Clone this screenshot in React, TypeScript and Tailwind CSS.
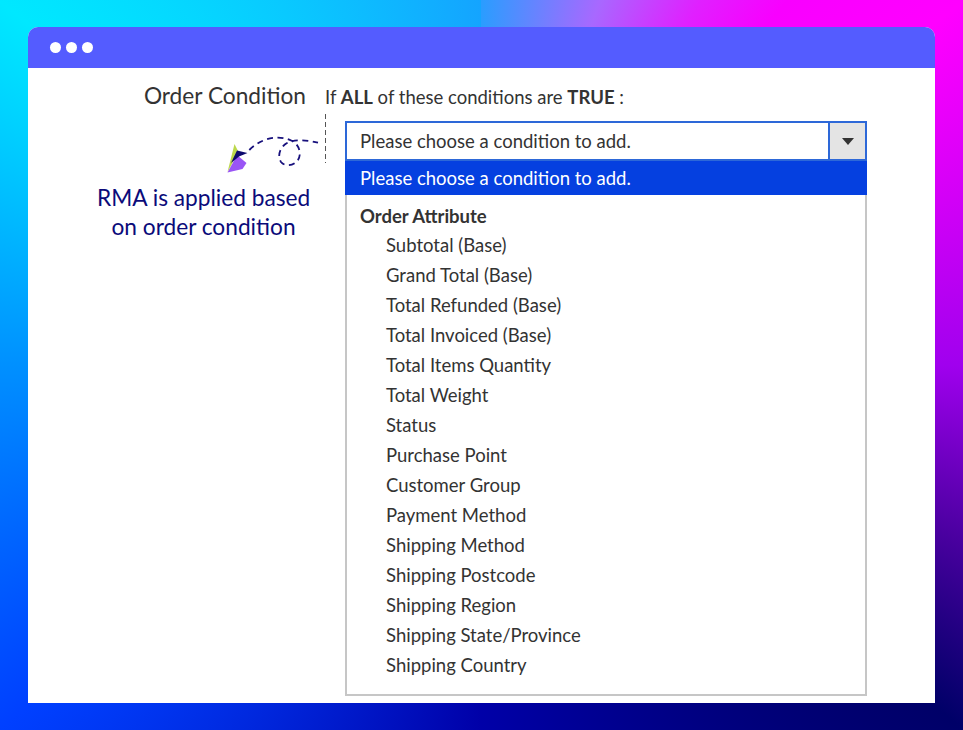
const options = [
  "Subtotal (Base)",
  "Grand Total (Base)",
  "Total Refunded (Base)",
  "Total Invoiced (Base)",
  "Total Items Quantity",
  "Total Weight",
  "Status",
  "Purchase Point",
  "Customer Group",
  "Payment Method",
  "Shipping Method",
  "Shipping Postcode",
  "Shipping Region",
  "Shipping State/Province",
  "Shipping Country",
];

export default function App() {
  return (
    <div className="w-[963px] h-[730px] pt-[27px] px-[28px] overflow-hidden bg-[conic-gradient(from_0deg_at_50%_50%,#2a9dff_0deg,#a868ff_18deg,#e020ff_31deg,#f800ff_40deg,#ff00ff_53deg,#a000ee_90deg,#4a00a0_110deg,#000068_127deg,#0000a8_180deg,#0040ff_233deg,#0090ff_270deg,#00e8ff_307deg,#14a4ff_360deg)] font-['Lato',sans-serif] text-[#333]">
      <div className="w-[907px] h-[676px] flex flex-col bg-white rounded-t-[10px] overflow-hidden">
        <div className="h-[41px] shrink-0 bg-[#545cff] flex items-center gap-[5px] pl-[22px] pb-[1px]">
          <span className="w-[11px] h-[11px] rounded-full bg-white" />
          <span className="w-[11px] h-[11px] rounded-full bg-white" />
          <span className="w-[11px] h-[11px] rounded-full bg-white" />
        </div>
        <div className="flex flex-1">
          <div className="w-[297px] shrink-0 flex flex-col">
            <div className="mt-[14px] h-[28px] mr-[19px] text-right text-[22.7px] leading-[28px] whitespace-nowrap">
              Order Condition
            </div>
            <svg width="102" height="64" viewBox="0 0 102 64" className="mt-[2px] ml-[197px] overflow-visible" fill="none">
              <path d="M2.5 60 L9.5 32 L13 39 L8 50 Z" fill="#bcd84c" />
              <path d="M2.5 60.5 L12 43 L21.5 51 L17.5 57 Z" fill="#9a55f5" />
              <path d="M6 51 L12 38.5 L22.5 41 L14 44.5 Z" fill="#0d0a6e" />
              <path
                d="M24.3 38 C35 27 52 22 66.7 28.7 C74 32 77 42 73 48 C69 54 60 55 56 50 C52 44 55 35 62 31 C70 27 82 28 93 30.7"
                stroke="#17107c"
                strokeWidth="1.8"
                strokeDasharray="6 4.5"
              />
              <path d="M100.5 2 V51" stroke="#555" strokeWidth="1" strokeDasharray="5 3" />
            </svg>
            <div className="mt-[7px] pl-[69px] w-[282px] text-center text-[22.7px] leading-[29px] text-[#0b0b7a] whitespace-nowrap">
              RMA is applied based
              <br />
              on order condition
            </div>
          </div>
          <div className="flex-1 flex flex-col">
            <div className="mt-[17px] h-[24px] text-[18.5px] leading-[24px] whitespace-nowrap">
              If <b>ALL</b> of these conditions are <b>TRUE</b> :
            </div>
            <div className="mt-[12px] ml-[20px] w-[522px] h-[575px] flex flex-col text-[18.5px]">
              <div className="h-[40px] shrink-0 flex border-2 border-[#2d68d8]">
                <div className="flex-1 flex items-center pl-[13px] pt-[1px]">Please choose a condition to add.</div>
                <div className="w-[37px] shrink-0 border-l-2 border-[#2d68d8] bg-[#e4e4e4] flex items-center justify-center">
                  <span className="w-0 h-0 border-x-[6px] border-x-transparent border-t-[7px] border-t-[#333]" />
                </div>
              </div>
              <div className="flex-1 flex flex-col border-2 border-t-0 border-[#c6c6c6]">
                <div className="h-[34px] shrink-0 -mx-[2px] pl-[15px] pt-[1px] flex items-center bg-[#0540e0] text-white">
                  Please choose a condition to add.
                </div>
                <div className="mt-[6px] h-[30px] pl-[13px] pt-[1px] flex items-center font-bold">Order Attribute</div>
                {options.map((o) => (
                  <div key={o} className="h-[30px] pl-[39px] pb-[1px] flex items-center">
                    {o}
                  </div>
                ))}
              </div>
            </div>
          </div>
        </div>
      </div>
    </div>
  );
}
